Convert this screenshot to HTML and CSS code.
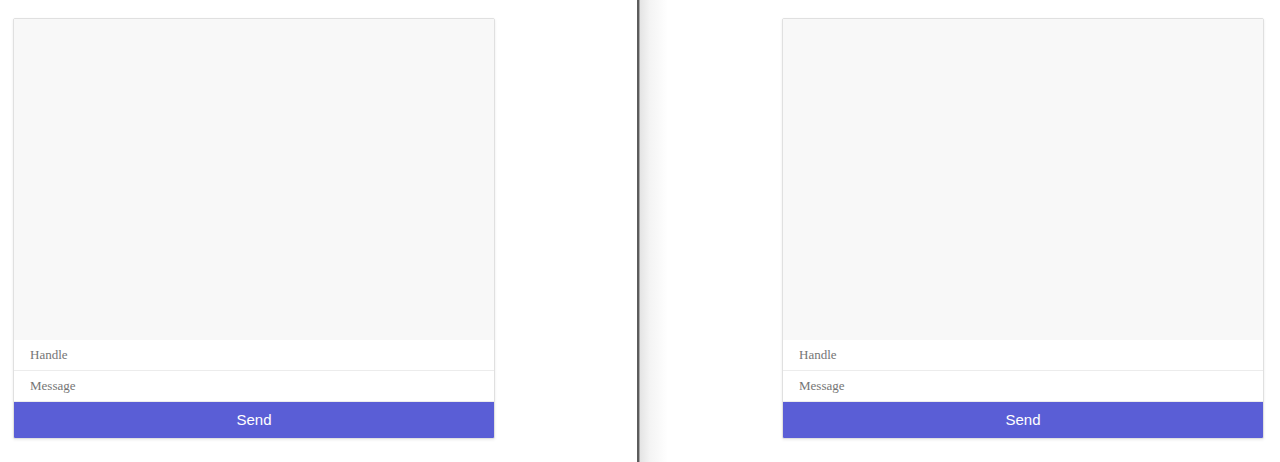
FILE: index.html
```html
<!DOCTYPE html>
<html lang="en">
<head>
    <meta charset="UTF-8">
    <meta name="viewport" content="width=device-width, initial-scale=1.0">
    <title>Chat</title>
    <link rel="stylesheet" href="styles.css">
</head>
<body>

    <div class="split">
        <div class="pane pane-left">
            <div class="chat">
                <div class="messages"></div>
                <input type="text" class="chat-input" placeholder="Handle">
                <input type="text" class="chat-input" placeholder="Message">
                <button class="send-btn">Send</button>
            </div>
        </div>

        <div class="divider"></div>

        <div class="pane pane-right">
            <div class="chat">
                <div class="messages"></div>
                <input type="text" class="chat-input" placeholder="Handle">
                <input type="text" class="chat-input" placeholder="Message">
                <button class="send-btn">Send</button>
            </div>
        </div>
    </div>

</body>
</html>
```

FILE: styles.css
```css
/* --- Basic Setup --- */
body {
    margin: 0;
    background-color: #ffffff;
    font-family: "Liberation Serif", "Times New Roman", serif;
}

.split {
    display: flex;
    height: 462px;
}

/* --- Panes --- */
.pane {
    padding-top: 18px;
    box-sizing: border-box;
}

.pane-left {
    width: 637px;
    padding-left: 13px;
}

.pane-right {
    flex: 1;
    display: flex;
    justify-content: flex-end;
    align-items: flex-start;
    padding-right: 16px;
    background: linear-gradient(to right, #e4e4e4 0, #f4f4f4 10px, #ffffff 28px);
}

.divider {
    width: 2px;
    background-color: #5c5c5c;
    border-right: 1px solid #a8a8a8;
}

/* --- Chat Card --- */
.chat {
    width: 482px;
    border: 1px solid #e0e0e0;
    border-radius: 2px;
    box-sizing: border-box;
    box-shadow: 0 1px 3px rgba(0, 0, 0, 0.08);
    display: flex;
    flex-direction: column;
    background-color: #ffffff;
    overflow: hidden;
}

.messages {
    height: 321px;
    background-color: #f8f8f8;
}

.chat-input {
    height: 31px;
    border: none;
    border-bottom: 1px solid #ececec;
    padding: 0 16px;
    margin: 0;
    font-family: inherit;
    font-size: 13px;
    color: #333;
    background-color: #ffffff;
    outline: none;
    box-sizing: border-box;
}

.chat-input::placeholder { color: #757575; }

.send-btn {
    height: 36px;
    border: none;
    margin: 0;
    padding: 0 0 2px;
    background-color: #5a5ed6;
    color: #ffffff;
    font-family: "Liberation Sans", Arial, sans-serif;
    font-size: 15px;
    cursor: pointer;
}
```
